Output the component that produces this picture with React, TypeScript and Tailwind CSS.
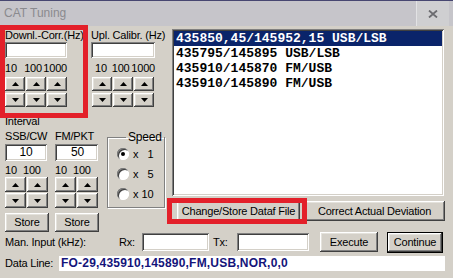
import type { ReactNode } from 'react'

const raised =
  'bg-[#d4d0c8] shadow-[inset_-1px_-1px_#404040,inset_1px_1px_#ffffff,inset_-2px_-2px_#808080,inset_2px_2px_#e4e2dc]'
const sunken =
  'bg-white shadow-[inset_1px_1px_#808080,inset_-1px_-1px_#ffffff,inset_2px_2px_#404040,inset_-2px_-2px_#d4d0c8]'

function Tri({ up }: { up?: boolean }) {
  return (
    <svg width="7" height="4" viewBox="0 0 7 4" aria-hidden="true">
      <path d={up ? 'M3.5 0L7 4H0z' : 'M0 0h7L3.5 4z'} fill="#000" />
    </svg>
  )
}

function ArrowBtn({ up, className }: { up?: boolean; className: string }) {
  return (
    <div className={`${raised} flex items-center justify-center ${className}`}>
      <Tri up={up} />
    </div>
  )
}

function Btn({ children, className }: { children: ReactNode; className: string }) {
  return (
    <div className={`${raised} flex items-center justify-center whitespace-nowrap ${className}`}>
      {children}
    </div>
  )
}

function Radio({ checked, n }: { checked?: boolean; n: string }) {
  return (
    <div className="flex h-[20px] items-center">
      <div className="flex h-[12px] w-[12px] items-center justify-center rounded-full bg-white shadow-[inset_1px_1px_#808080,inset_-1px_-1px_#ffffff,inset_2px_2px_#404040]">
        {checked && <div className="h-[4px] w-[4px] rounded-full bg-black" />}
      </div>
      <span className="ml-[4px]">x</span>
      <span className="w-[15px] text-right">{n}</span>
    </div>
  )
}

const listRows = [
  '435850,45/145952,15 USB/LSB',
  '435795/145895 USB/LSB',
  '435910/145870 FM/USB',
  '435910/145890 FM/USB',
]

export default function App() {
  return (
    <div className="relative h-[278px] w-[453px] overflow-hidden bg-[#d4d0c8] font-['Liberation_Sans',Arial,sans-serif] text-[11px] leading-[13px] tracking-[-0.2px] text-black">
      {/* title bar */}
      <div className="flex h-[26px] items-center justify-between border-t border-[#474771] bg-[#c6c5ca]">
        <span className="pl-[4px] text-[12px] tracking-normal text-[#8a8a8e]">CAT Tuning</span>
        <div className="mr-[4px] flex h-[25px] w-[33px] items-center justify-center border-l border-[#e2e2e4] bg-[#cfcfd1]">
          <svg width="10" height="8" viewBox="0 0 10 8" aria-hidden="true">
            <path d="M1 0.5L9 7.5M9 0.5L1 7.5" stroke="#6c6c70" strokeWidth="1.8" />
          </svg>
        </div>
      </div>

      <div className="flex h-[206px]">
        {/* left controls */}
        <div className="w-[172px] pl-[5px]">
          <div className="flex gap-[24px] pt-[3px]">
            <div className="w-[62px]">
              <div className="h-[12px] whitespace-nowrap leading-[12px]">Downl.-Corr.(Hz)</div>
              <div className={`${sunken} mt-[1px] h-[16px] w-[62px]`} />
              <div className="mt-[3px] flex h-[14px] items-center whitespace-nowrap">
                <span className="w-[21px]">10</span>
                <span className="w-[21px]">100</span>
                <span>1000</span>
              </div>
              <div className="mt-[2px] flex gap-[1px]">
                <ArrowBtn up className="h-[14px] w-[20px]" />
                <ArrowBtn up className="h-[14px] w-[20px]" />
                <ArrowBtn up className="h-[14px] w-[20px]" />
              </div>
              <div className="mt-[2px] flex gap-[1px]">
                <ArrowBtn className="h-[14px] w-[20px]" />
                <ArrowBtn className="h-[14px] w-[20px]" />
                <ArrowBtn className="h-[14px] w-[20px]" />
              </div>
            </div>
            <div className="w-[64px]">
              <div className="h-[12px] whitespace-nowrap leading-[12px]">Upl. Calibr. (Hz)</div>
              <div className={`${sunken} mt-[1px] h-[16px] w-[64px]`} />
              <div className="mt-[3px] flex h-[14px] items-center whitespace-nowrap pl-[4px]">
                <span className="w-[18px]">10</span>
                <span className="w-[21px]">100</span>
                <span>1000</span>
              </div>
              <div className="mt-[2px] flex gap-[1px] pl-[1px]">
                <ArrowBtn up className="h-[14px] w-[20px]" />
                <ArrowBtn up className="h-[14px] w-[20px]" />
                <ArrowBtn up className="h-[14px] w-[20px]" />
              </div>
              <div className="mt-[2px] flex gap-[1px] pl-[1px]">
                <ArrowBtn className="h-[14px] w-[20px]" />
                <ArrowBtn className="h-[14px] w-[20px]" />
                <ArrowBtn className="h-[14px] w-[20px]" />
              </div>
            </div>
          </div>

          <div className="mt-[8px] h-[13px]">Interval</div>

          <div className="mt-[2px] flex">
            <div className="w-[44px]">
              <div className="h-[13px]">SSB/CW</div>
              <div className={`${sunken} mt-[1px] flex h-[17px] w-[42px] items-center justify-center text-[12px]`}>
                10
              </div>
              <div className="mt-[3px] flex h-[13px] items-center">
                <span className="w-[18px]">10</span>
                <span>100</span>
              </div>
              <div className="flex gap-[1px]">
                <ArrowBtn up className="h-[15px] w-[21px]" />
                <ArrowBtn up className="h-[15px] w-[21px]" />
              </div>
              <div className="mt-[1px] flex gap-[1px]">
                <ArrowBtn className="h-[15px] w-[21px]" />
                <ArrowBtn className="h-[15px] w-[21px]" />
              </div>
              <Btn className="mt-[5px] h-[19px] w-[44px]">Store</Btn>
            </div>

            <div className="ml-[6px] w-[44px]">
              <div className="h-[13px]">FM/PKT</div>
              <div className={`${sunken} mt-[1px] flex h-[17px] w-[43px] items-center justify-center pl-[2px] text-[12px]`}>
                50
              </div>
              <div className="mt-[3px] flex h-[13px] items-center">
                <span className="w-[18px]">10</span>
                <span>100</span>
              </div>
              <div className="flex gap-[1px]">
                <ArrowBtn up className="h-[15px] w-[21px]" />
                <ArrowBtn up className="h-[15px] w-[21px]" />
              </div>
              <div className="mt-[1px] flex gap-[1px]">
                <ArrowBtn className="h-[15px] w-[21px]" />
                <ArrowBtn className="h-[15px] w-[21px]" />
              </div>
              <Btn className="mt-[5px] h-[19px] w-[44px]">Store</Btn>
            </div>

            <fieldset className="ml-[8px] mt-[1px] h-[77px] w-[57px] border border-[#808080] pl-[9px] shadow-[1px_1px_0_#ffffff,inset_1px_1px_0_#ffffff]">
              <legend className="ml-[9px] px-[2px] text-[12px] leading-[12px]">Speed</legend>
              <div className="mt-[1px]">
                <Radio checked n="1" />
                <Radio n="5" />
                <Radio n="10" />
              </div>
            </fieldset>
          </div>
        </div>

        {/* list + buttons */}
        <div className="pt-[3px]">
          <div className={`${sunken} h-[167px] w-[272px] p-[2px]`}>
            <div className="font-['Liberation_Mono',monospace] text-[13px] font-bold leading-[15px] tracking-normal">
              {listRows.map((r, i) => (
                <div
                  key={r}
                  className={`h-[15px] whitespace-nowrap pl-[2px] ${i === 0 ? 'bg-[#0a246a] text-white' : 'text-black'}`}
                >
                  {r}
                </div>
              ))}
            </div>
          </div>
          <div className="mt-[5px] flex gap-[4px] pl-[5px]">
            <Btn className="h-[20px] w-[123px]">Change/Store Dataf File</Btn>
            <Btn className="h-[20px] w-[141px]">Correct Actual Deviation</Btn>
          </div>
        </div>
      </div>

      {/* manual input */}
      <div className="flex h-[20px] items-center pl-[5px]">
        <span className="w-[114px] whitespace-nowrap">Man. Input (kHz):</span>
        <span className="w-[23px]">Rx:</span>
        <div className={`${sunken} h-[18px] w-[67px]`} />
        <span className="ml-[4px] w-[24px]">Tx:</span>
        <div className={`${sunken} h-[18px] w-[72px]`} />
        <Btn className="ml-[11px] h-[20px] w-[58px]">Execute</Btn>
        <div className="ml-[9px] h-[21px] w-[56px] border border-black">
          <Btn className="h-full w-full">Continue</Btn>
        </div>
      </div>

      {/* data line */}
      <div className="mt-[4px] flex h-[15px] items-center pl-[5px]">
        <span className="w-[54px] whitespace-nowrap">Data Line:</span>
        <div className="flex h-[15px] w-[386px] items-center bg-white pl-[2px] text-[12px] font-bold tracking-[0.2px] text-[#14147a]">
          FO-29,435910,145890,FM,USB,NOR,0,0
        </div>
      </div>

      {/* red highlight annotations */}
      <div className="pointer-events-none absolute left-0 top-[25px] h-[93px] w-[88px] border-[5px] border-[#e3202a]" />
      <div className="pointer-events-none absolute left-[167px] top-[198px] h-[26px] w-[140px] border-[5px] border-[#e3202a]" />
    </div>
  )
}
